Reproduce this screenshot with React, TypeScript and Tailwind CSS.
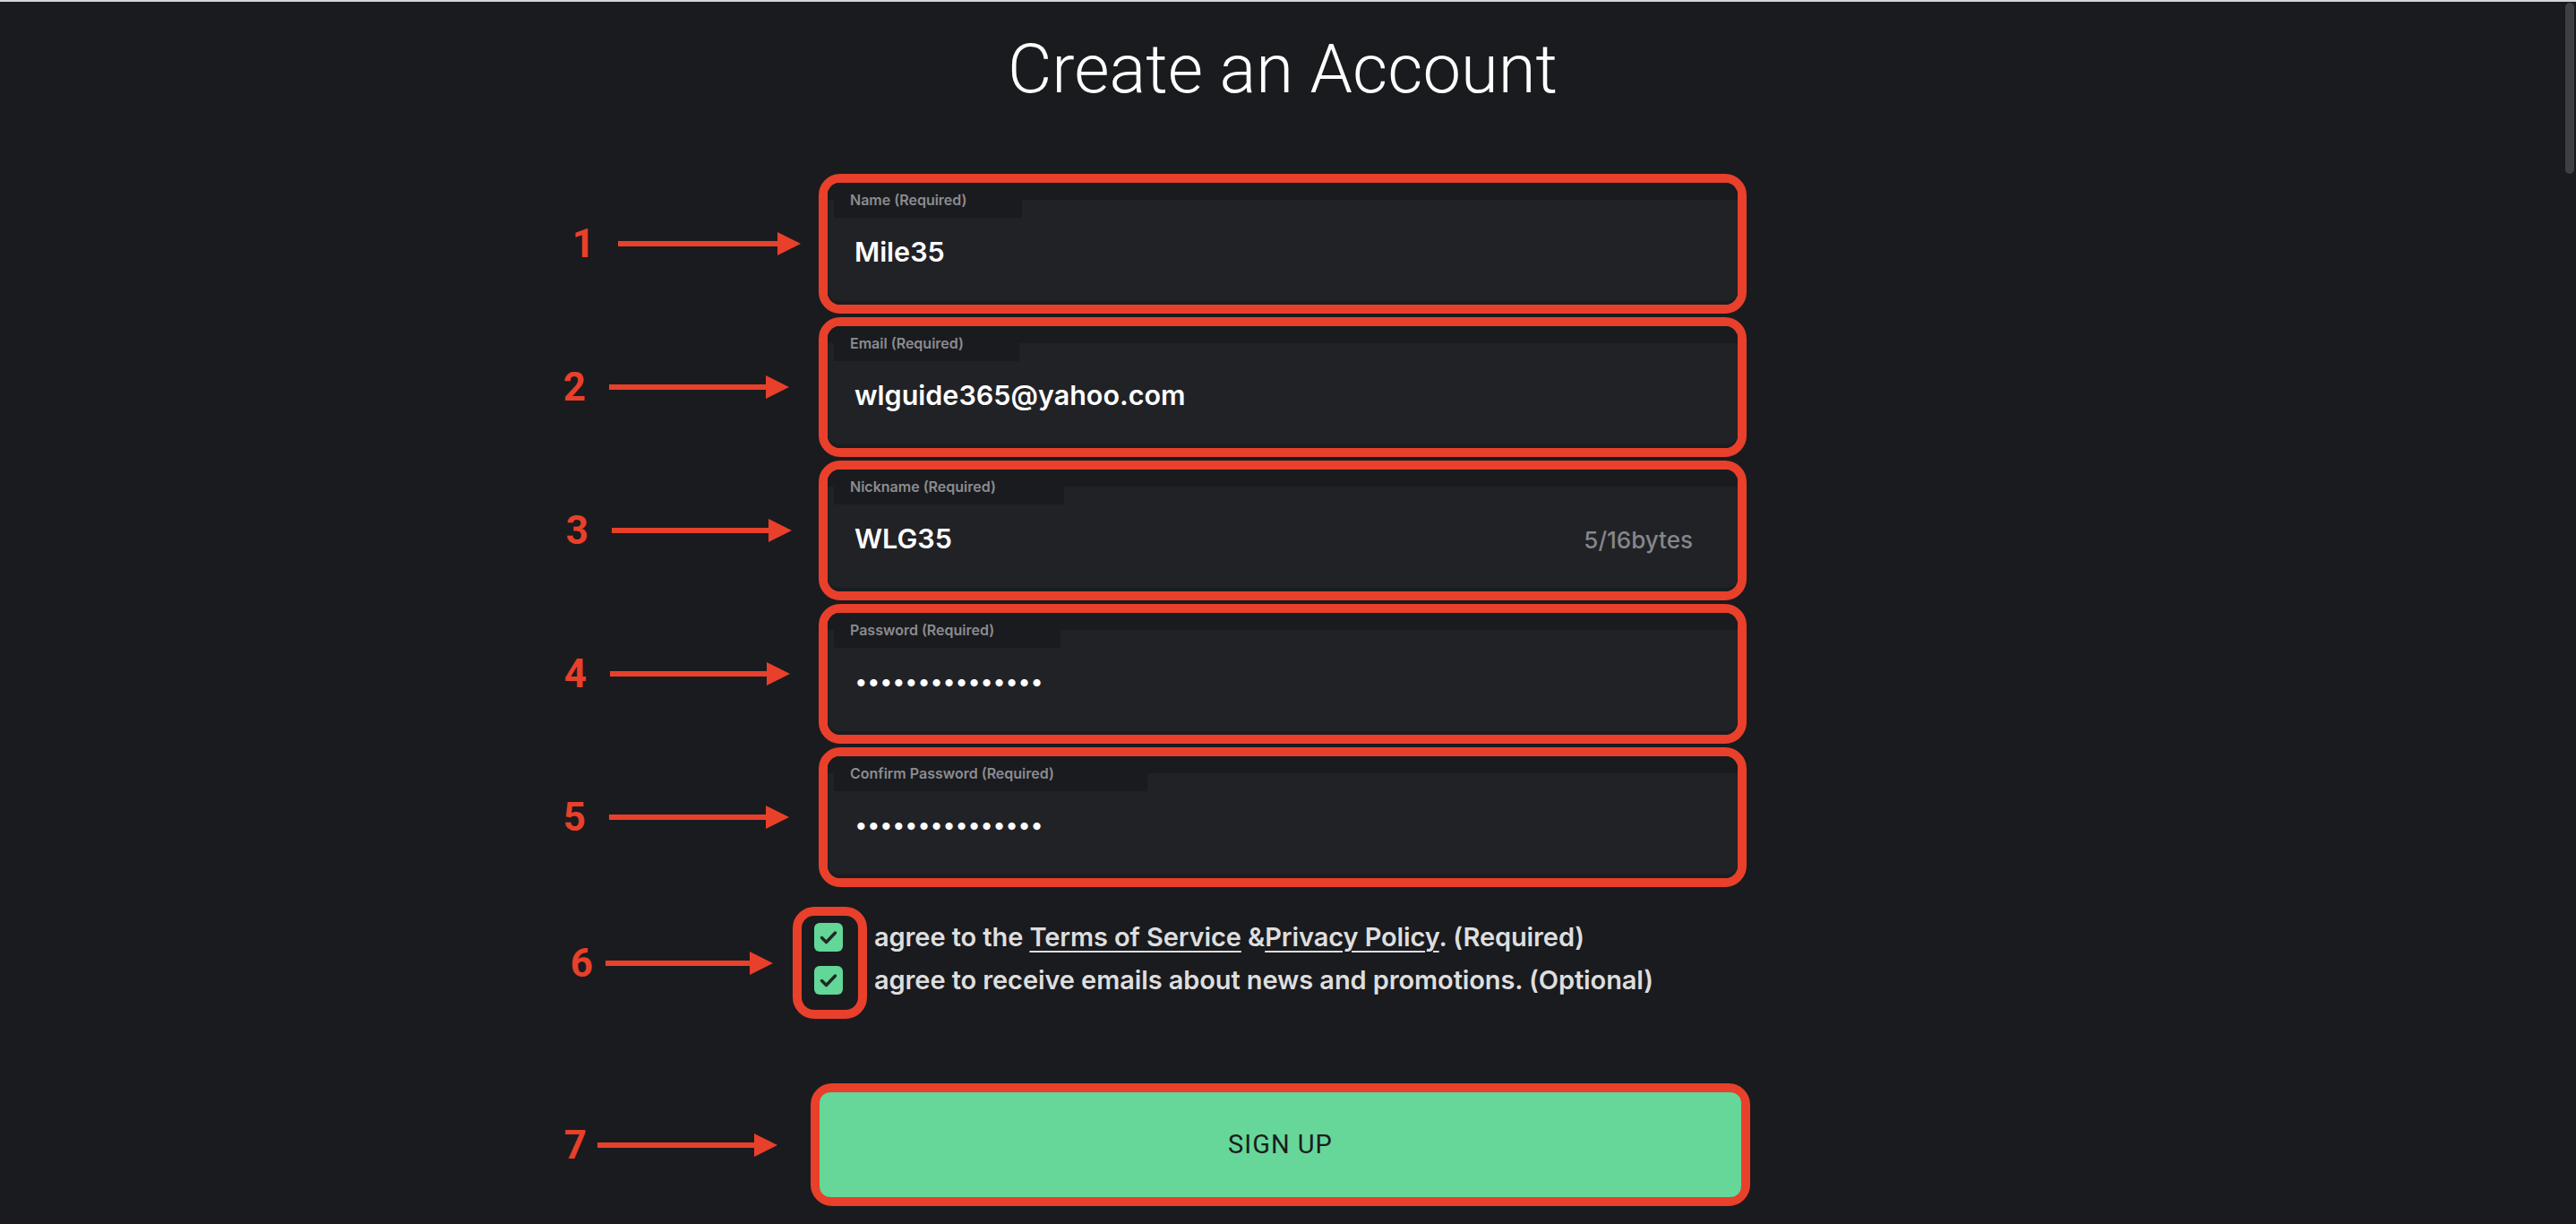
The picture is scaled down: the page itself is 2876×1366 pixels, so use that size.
import React from "react";

const RED = "#e8402a";

function Arrow({ width }: { width: number }) {
    return (
        <svg width={width} height="26" viewBox={`0 0 ${width} 26`} className="shrink-0">
            <rect x="0" y="10" width={width - 24} height="6" fill={RED} />
            <polygon points={`${width - 26},0 ${width},13 ${width - 26},26`} fill={RED} />
        </svg>
    );
}

// annotation number + arrow, sits left of the boxed element
function Marker({ n, arrow, gap, offset }: { n: number; arrow: number; gap: number; offset: number }) {
    return (
        <div
            className="absolute top-1/2 -translate-y-1/2 flex items-center"
            style={{ right: `calc(100% + ${offset}px)`, gap }}
        >
            <span className="text-[44px] leading-none font-bold text-[#e8402a] [font-family:Roboto,sans-serif]">{n}</span>
            <Arrow width={arrow} />
        </div>
    );
}

interface FieldProps {
    n: number;
    label: string;
    tab: number;
    value: string;
    hint?: string;
    secret?: boolean;
    arrowGap: number;
}

function Field({ n, label, tab, value, hint, secret, arrowGap }: FieldProps) {
    return (
        <div className="relative h-[156px] rounded-[24px] border-[10px] border-[#e8402a]">
            <Marker n={n} arrow={n === 1 ? 204 : 201} gap={n === 1 ? 26 : 26} offset={arrowGap + 10} />
            <div className="h-full rounded-[14px] overflow-hidden bg-[#212226] border-b-[4px] border-[#1b1c20] flex flex-col">
                <div className="h-[39px] shrink-0 bg-[linear-gradient(#1a1b1f_19px,transparent_19px)]">
                    <div className="ml-[7px] h-[39px] bg-[#1a1b1f] pl-[18px] pt-[9px]" style={{ width: tab }}>
                        <span className="block text-[16px] leading-[20px] font-semibold text-[#8b8c91]">{label}</span>
                    </div>
                </div>
                <div className="mt-[19px] flex items-baseline justify-between pl-[30px] pr-[50px]">
                    {secret ? (
                        <span className="text-[26px] leading-[38px] tracking-[-0.6px] text-white">{value}</span>
                    ) : (
                        <span className="text-[30.5px] leading-[38px] font-semibold text-white">{value}</span>
                    )}
                    {hint && <span className="text-[26px] font-medium text-[#85868b]">{hint}</span>}
                </div>
            </div>
        </div>
    );
}

function Check() {
    return (
        <div className="w-[32px] h-[32px] rounded-[6px] bg-[#63d797] flex items-center justify-center">
            <svg width="32" height="32" viewBox="0 0 32 32">
                <path d="M8.5 16.5 L13.5 21.5 L23.5 11" fill="none" stroke="#1e2a24" strokeWidth="3.5" strokeLinecap="round" strokeLinejoin="round" />
            </svg>
        </div>
    );
}

export default function App() {
    const fields: FieldProps[] = [
        { n: 1, label: "Name (Required)", tab: 210, value: "Mile35", arrowGap: 20 },
        { n: 2, label: "Email (Required)", tab: 207, value: "wlguide365@yahoo.com", arrowGap: 33 },
        { n: 3, label: "Nickname (Required)", tab: 257, value: "WLG35", hint: "5/16bytes", arrowGap: 30 },
        { n: 4, label: "Password (Required)", tab: 253, value: "•••••••••••••••", secret: true, arrowGap: 32 },
        { n: 5, label: "Confirm Password (Required)", tab: 350, value: "•••••••••••••••", secret: true, arrowGap: 33 },
    ];

    return (
        <div className="w-[2876px] h-[1366px] overflow-hidden bg-[#1a1b1f] flex flex-col [font-family:Inter,sans-serif]">
            <div className="h-[2px] bg-[#d6d6d6] shrink-0" />
            <div className="flex flex-1 min-h-0">
                <main className="flex-1 flex flex-col items-center">
                    <h1 className="mt-[37px] text-[76px] leading-[76px] font-light text-white [font-family:Roboto,sans-serif]">
                        Create an Account
                    </h1>

                    <div className="mt-[79px] w-[1036px] flex flex-col gap-[4px]">
                        {fields.map((f) => (
                            <Field key={f.n} {...f} />
                        ))}
                    </div>

                    <div className="mt-[22px] w-[1036px]">
                        <div className="relative ml-[-29px] flex items-start gap-[8px]">
                            <div className="relative rounded-[24px] border-[10px] border-[#e8402a] pt-[8px] pb-[17px] pl-[14px] pr-[17px] flex flex-col gap-[16px]">
                                <Marker n={6} arrow={187} gap={14} offset={32} />
                                <Check />
                                <Check />
                            </div>
                            <div className="mt-[10px] text-[29px] leading-[48px] font-semibold tracking-[-0.1px] text-[#dedede]">
                                <p>
                                    agree to the{" "}
                                    <span className="underline decoration-2 underline-offset-[5px]">Terms of Service</span>{" "}
                                    &amp;<span className="underline decoration-2 underline-offset-[5px]">Privacy Policy</span>. (Required)
                                </p>
                                <p>agree to receive emails about news and promotions. (Optional)</p>
                            </div>
                        </div>
                    </div>

                    <div className="mt-[72px] w-[1036px]">
                        <div className="relative ml-[-9px] w-[1049px] h-[137px] rounded-[24px] border-[10px] border-[#e8402a]">
                            <Marker n={7} arrow={201} gap={12} offset={47} />
                            <button className="w-full h-full rounded-[12px] bg-[#66d799] text-[29px] tracking-[1px] text-[#1a1c1d] [font-family:Roboto,sans-serif]">
                                SIGN UP
                            </button>
                        </div>
                    </div>
                </main>
                <div className="w-[12px] shrink-0 pt-[1px]">
                    <div className="w-[10px] h-[191px] rounded-full bg-[#3e3f45]" />
                </div>
            </div>
        </div>
    );
}
